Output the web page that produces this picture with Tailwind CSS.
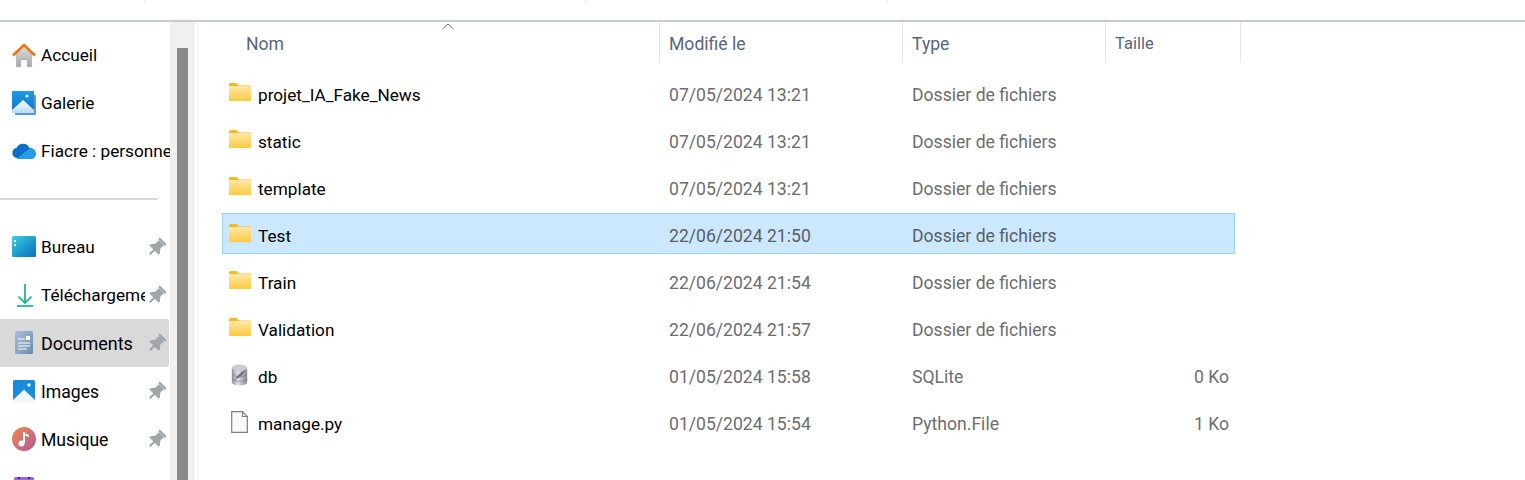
<!DOCTYPE html>
<html lang="fr">
<head>
    <meta charset="utf-8">
    <title>Explorateur de fichiers</title>
    <script src="https://cdn.jsdelivr.net/npm/@tailwindcss/browser@4"></script>
</head>
<body class="h-[480px] overflow-hidden bg-white font-['Roboto',sans-serif] text-[17.2px] text-black">
    <!-- top strip -->
    <div class="h-5 flex items-start">
        <div class="w-[146px] h-[3px] border-r-2 border-[#f0f0f0]"></div>
        <div class="w-[441px] h-[3px] border-r-2 border-[#f0f0f0]"></div>
        <div class="w-[301px] h-[3px] border-r-2 border-[#f0f0f0]"></div>
    </div>
    <div class="h-[2px] bg-[#c0ced5]"></div>

    <div class="flex h-[458px] overflow-hidden">
        <!-- sidebar -->
        <nav class="w-[170px] shrink-0 pt-[9px]">
            <div class="h-12 flex items-center pl-3 gap-[5px]">
                <svg class="w-6 h-6 shrink-0" viewBox="0 0 24 24"><defs><linearGradient id="g1" x1="0" y1="0" x2="0" y2="1"><stop offset="0" stop-color="#d8d8d8"/><stop offset="1" stop-color="#a9a9a9"/></linearGradient></defs><path d="M4 11 12 4l8 7v12a1 1 0 0 1-1 1h-4v-7H9v7H5a1 1 0 0 1-1-1z" fill="url(#g1)"/><path d="M1 12.500 12 2l11 10.500" fill="none" stroke="#e8750f" stroke-width="2.600"/></svg>
                <span class="pt-[2px]">Accueil</span>
            </div>
            <div class="h-12 flex items-center pl-3 gap-[5px]">
                <svg class="w-6 h-6 shrink-0" viewBox="0 0 24 24"><defs><linearGradient id="g5" x1="0" y1="0" x2="0" y2="1"><stop offset="0" stop-color="#1a9be8"/><stop offset="1" stop-color="#1470c8"/></linearGradient><linearGradient id="g6" x1="0" y1="0" x2="0" y2="1"><stop offset="0" stop-color="#ffffff"/><stop offset="1" stop-color="#b8dcf7"/></linearGradient></defs><path d="M3 4h20a1 1 0 0 1 1 1v18a1 1 0 0 1-1 1H3z" fill="#5a9ad8"/><path d="M1 0h20a1 1 0 0 1 1 1v20a1 1 0 0 1-1 1H1a1 1 0 0 1-1-1V1a1 1 0 0 1 1-1z" fill="url(#g5)"/><path d="M0 19 11 9l11 10v3H0z" fill="url(#g6)"/><circle cx="15" cy="5" r="1.500" fill="#e8f4fd"/></svg>
                <span class="pt-[2px]">Galerie</span>
            </div>
            <div class="h-12 flex items-center pl-3 gap-[5px]">
                <svg class="w-6 h-6 shrink-0" viewBox="0 0 24 24"><path d="M5 19a5 5 0 0 1-.500-9.900A7 7 0 0 1 17.500 9 5 5 0 0 1 19 19z" fill="#0a6fc8"/><path d="M5 20 14 12l4-2.500a5 5 0 0 1 1.500 10.500z" fill="#2a9be8"/></svg>
                <span class="pt-[2px] whitespace-nowrap overflow-hidden w-[129px]">Fiacre : personnel</span>
            </div>
            <div class="h-12 flex items-center">
                <div class="w-[158px] h-[2px] bg-[#d5d8da]"></div>
            </div>
            <div class="h-12 flex items-center pl-3 gap-[5px] relative">
                <svg class="w-6 h-6 shrink-0" viewBox="0 0 24 24"><defs><linearGradient id="g2" x1="0" y1="0" x2="1" y2="1"><stop offset="0" stop-color="#35d3e4"/><stop offset="1" stop-color="#0a6bb8"/></linearGradient></defs><rect y="1" width="24" height="21" rx="1.500" fill="url(#g2)"/><rect x="2" y="5" width="2" height="2" fill="#fff"/><rect x="2" y="9" width="2" height="2" fill="#fff"/></svg>
                <span class="pt-[2px]">Bureau</span>
                <svg class="absolute left-[147px] w-[19px] h-[19px]" viewBox="0 0 16 16"><g transform="rotate(45 8 8)" fill="#9fa7ad"><rect x="4" y="0" width="8" height="2"/><path d="M5 2h6v4.500l2.500 3V11h-11V9.500L5 6.500z"/><rect x="7.100" y="10" width="1.800" height="6"/></g></svg>
            </div>
            <div class="h-12 flex items-center pl-[17px] gap-[8px] relative">
                <svg class="w-4 h-[24px] shrink-0" viewBox="0 0 16 24"><path d="M8 1v19M1.500 13.500 8 20l6.500-6.500" fill="none" stroke="#16b096" stroke-width="1.700"/><path d="M0 23h16" stroke="#16b096" stroke-width="1.700"/></svg>
                <span class="pt-[2px] whitespace-nowrap overflow-hidden w-[104px]">Téléchargements</span>
                <svg class="absolute left-[147px] w-[19px] h-[19px]" viewBox="0 0 16 16"><g transform="rotate(45 8 8)" fill="#9fa7ad"><rect x="4" y="0" width="8" height="2"/><path d="M5 2h6v4.500l2.500 3V11h-11V9.500L5 6.500z"/><rect x="7.100" y="10" width="1.800" height="6"/></g></svg>
            </div>
            <div class="h-12 flex items-center pl-[15px] gap-[8px] relative bg-[#d9d9d9] w-[169px] rounded-r-[3px]">
                <svg class="w-[18px] h-6 shrink-0" viewBox="0 0 18 24"><defs><linearGradient id="g3" x1="0" y1="0" x2="1" y2="1"><stop offset="0" stop-color="#a8c0da"/><stop offset="1" stop-color="#6a8cae"/></linearGradient></defs><rect width="18" height="23" rx="1.500" fill="url(#g3)"/><path d="M3 8h7M3 12h12M3 15h12M3 18h9" stroke="#fff" stroke-width="1.200"/><rect x="11" y="5" width="4" height="4" fill="#fff"/></svg>
                <span class="text-[18px]">Documents</span>
                <svg class="absolute left-[147px] w-[19px] h-[19px]" viewBox="0 0 16 16"><g transform="rotate(45 8 8)" fill="#9fa7ad"><rect x="4" y="0" width="8" height="2"/><path d="M5 2h6v4.500l2.500 3V11h-11V9.500L5 6.500z"/><rect x="7.100" y="10" width="1.800" height="6"/></g></svg>
            </div>
            <div class="h-12 flex items-center pl-[13px] gap-[6px] relative">
                <svg class="w-[22px] h-[22px] shrink-0" viewBox="0 0 22 22"><rect width="22" height="22" rx="1.500" fill="#1a8ae0"/><path d="M0 20 11 9.500 22 20v2H0z" fill="#f2f8fd"/><circle cx="16" cy="5" r="1.700" fill="#f2f8fd"/></svg>
                <span class="pt-[2px] text-[17.6px]">Images</span>
                <svg class="absolute left-[147px] w-[19px] h-[19px]" viewBox="0 0 16 16"><g transform="rotate(45 8 8)" fill="#9fa7ad"><rect x="4" y="0" width="8" height="2"/><path d="M5 2h6v4.500l2.500 3V11h-11V9.500L5 6.500z"/><rect x="7.100" y="10" width="1.800" height="6"/></g></svg>
            </div>
            <div class="h-12 flex items-center pl-3 gap-[5px] relative">
                <svg class="w-6 h-6 shrink-0" viewBox="0 0 24 24"><defs><linearGradient id="g4" x1="0" y1="0" x2="1" y2="1"><stop offset="0" stop-color="#f08a4a"/><stop offset="1" stop-color="#b05a9e"/></linearGradient></defs><circle cx="12" cy="12" r="12" fill="url(#g4)"/><path d="M12 5v11" stroke="#fff" stroke-width="2"/><circle cx="9.500" cy="16.500" r="3" fill="#fff"/><path d="M12 5c1 2 4 2 5 3v2c-2-1-4-1-5-2z" fill="#fff"/></svg>
                <span class="pt-[2px] text-[17.6px]">Musique</span>
                <svg class="absolute left-[147px] w-[19px] h-[19px]" viewBox="0 0 16 16"><g transform="rotate(45 8 8)" fill="#9fa7ad"><rect x="4" y="0" width="8" height="2"/><path d="M5 2h6v4.500l2.500 3V11h-11V9.500L5 6.500z"/><rect x="7.100" y="10" width="1.800" height="6"/></g></svg>
            </div>
            <div class="h-12 flex items-center pl-[14px] gap-[7px] relative">
                <svg class="w-5 h-5 shrink-0" viewBox="0 0 20 20"><rect width="20" height="20" rx="1.500" fill="#9a62dc"/><rect x="4" width="2" height="2" fill="#3d2a70"/><rect x="14" width="2" height="2" fill="#3d2a70"/></svg>
                <span class="pt-[2px]">Vidéos</span>
            </div>
        </nav>

        <!-- scrollbar -->
        <div class="w-[25px] shrink-0 bg-[#f0f0f0] pl-[7px] pt-[26px]">
            <div class="w-[11px] h-[440px] bg-[#888888]"></div>
        </div>
        <div class="w-[2px] shrink-0"></div>
        <div class="w-[2px] shrink-0 bg-[#f5f5f5]"></div>

        <!-- file list -->
        <main class="pl-[23px] flex-1 relative">
            <svg class="absolute left-[243px] top-px w-[12px] h-[7px]" viewBox="0 0 12 7"><path d="M.500 6 6 1l5.500 5" fill="none" stroke="#6b6b6b"/></svg>
            <div class="grid grid-cols-[438px_243px_203px_135px] h-[41px] text-[#56657a] text-[17.6px]">
                <div class="pl-6 pt-1 flex items-center border-r border-[#e5e5e5]">Nom</div>
                <div class="pl-[9px] pt-1 flex items-center border-r border-[#e5e5e5]">Modifié le</div>
                <div class="pl-[9px] pt-1 flex items-center border-r border-[#e5e5e5]">Type</div>
                <div class="pl-[9px] pt-1 flex items-center border-r border-[#e5e5e5]"><span class="text-[16.5px]">Taille</span></div>
            </div>
            <div class="mt-[9px] flex flex-col gap-[6px] w-[1013px]">
                <div class="grid grid-cols-[437px_243px_203px_130px] h-[41px] pt-[6px] items-center border border-transparent">
                    <div class="flex items-center pl-[6px] gap-[7px]">
                        <svg class="w-[22px] h-[18px] shrink-0 -translate-y-[3px]" viewBox="0 0 22 18"><defs><linearGradient id="f1" x1="0" y1="0" x2="0" y2="1"><stop offset="0" stop-color="#ffe9a8"/><stop offset="1" stop-color="#fdc93f"/></linearGradient></defs><path d="M0 1.500A1.500 1.500 0 0 1 1.500 0h6L10 2.500h12V6H0z" fill="#f9b820"/><rect y="3" width="22" height="15" rx=".8" fill="url(#f1)"/></svg>
                        <span>projet_IA_Fake_News</span>
                    </div>
                    <div class="pl-[9px] text-[#6d6d6d] text-[17.6px]">07/05/2024 13:21</div>
                    <div class="pl-[9px] text-[#6d6d6d] text-[17.6px]">Dossier de fichiers</div>
                    <div></div>
                </div>
                <div class="grid grid-cols-[437px_243px_203px_130px] h-[41px] pt-[6px] items-center border border-transparent">
                    <div class="flex items-center pl-[6px] gap-[7px]">
                        <svg class="w-[22px] h-[18px] shrink-0 -translate-y-[3px]" viewBox="0 0 22 18"><path d="M0 1.500A1.500 1.500 0 0 1 1.500 0h6L10 2.500h12V6H0z" fill="#f9b820"/><rect y="3" width="22" height="15" rx=".8" fill="url(#f1)"/></svg>
                        <span>static</span>
                    </div>
                    <div class="pl-[9px] text-[#6d6d6d] text-[17.6px]">07/05/2024 13:21</div>
                    <div class="pl-[9px] text-[#6d6d6d] text-[17.6px]">Dossier de fichiers</div>
                    <div></div>
                </div>
                <div class="grid grid-cols-[437px_243px_203px_130px] h-[41px] pt-[6px] items-center border border-transparent">
                    <div class="flex items-center pl-[6px] gap-[7px]">
                        <svg class="w-[22px] h-[18px] shrink-0 -translate-y-[3px]" viewBox="0 0 22 18"><path d="M0 1.500A1.500 1.500 0 0 1 1.500 0h6L10 2.500h12V6H0z" fill="#f9b820"/><rect y="3" width="22" height="15" rx=".8" fill="url(#f1)"/></svg>
                        <span>template</span>
                    </div>
                    <div class="pl-[9px] text-[#6d6d6d] text-[17.6px]">07/05/2024 13:21</div>
                    <div class="pl-[9px] text-[#6d6d6d] text-[17.6px]">Dossier de fichiers</div>
                    <div></div>
                </div>
                <div class="grid grid-cols-[437px_243px_203px_130px] h-[41px] pt-[6px] items-center border border-[#99d1ff] bg-[#cce8ff]">
                    <div class="flex items-center pl-[6px] gap-[7px]">
                        <svg class="w-[22px] h-[18px] shrink-0 -translate-y-[3px]" viewBox="0 0 22 18"><path d="M0 1.500A1.500 1.500 0 0 1 1.500 0h6L10 2.500h12V6H0z" fill="#f9b820"/><rect y="3" width="22" height="15" rx=".8" fill="url(#f1)"/></svg>
                        <span>Test</span>
                    </div>
                    <div class="pl-[9px] text-[#5a5f63] text-[17.6px]">22/06/2024 21:50</div>
                    <div class="pl-[9px] text-[#5a5f63] text-[17.6px]">Dossier de fichiers</div>
                    <div></div>
                </div>
                <div class="grid grid-cols-[437px_243px_203px_130px] h-[41px] pt-[6px] items-center border border-transparent">
                    <div class="flex items-center pl-[6px] gap-[7px]">
                        <svg class="w-[22px] h-[18px] shrink-0 -translate-y-[3px]" viewBox="0 0 22 18"><path d="M0 1.500A1.500 1.500 0 0 1 1.500 0h6L10 2.500h12V6H0z" fill="#f9b820"/><rect y="3" width="22" height="15" rx=".8" fill="url(#f1)"/></svg>
                        <span>Train</span>
                    </div>
                    <div class="pl-[9px] text-[#6d6d6d] text-[17.6px]">22/06/2024 21:54</div>
                    <div class="pl-[9px] text-[#6d6d6d] text-[17.6px]">Dossier de fichiers</div>
                    <div></div>
                </div>
                <div class="grid grid-cols-[437px_243px_203px_130px] h-[41px] pt-[6px] items-center border border-transparent">
                    <div class="flex items-center pl-[6px] gap-[7px]">
                        <svg class="w-[22px] h-[18px] shrink-0 -translate-y-[3px]" viewBox="0 0 22 18"><path d="M0 1.500A1.500 1.500 0 0 1 1.500 0h6L10 2.500h12V6H0z" fill="#f9b820"/><rect y="3" width="22" height="15" rx=".8" fill="url(#f1)"/></svg>
                        <span>Validation</span>
                    </div>
                    <div class="pl-[9px] text-[#6d6d6d] text-[17.6px]">22/06/2024 21:57</div>
                    <div class="pl-[9px] text-[#6d6d6d] text-[17.6px]">Dossier de fichiers</div>
                    <div></div>
                </div>
                <div class="grid grid-cols-[437px_243px_203px_130px] h-[41px] pt-[6px] items-center border border-transparent">
                    <div class="flex items-center pl-[8px] gap-[10px]">
                        <svg class="w-[17px] h-[22px] shrink-0 -translate-y-[2px]" viewBox="0 0 20 24" preserveAspectRatio="none"><defs><linearGradient id="d1" x1="0" y1="0" x2="1" y2="0"><stop offset="0" stop-color="#8f939c"/><stop offset=".4" stop-color="#dfe1e6"/><stop offset="1" stop-color="#85888f"/></linearGradient></defs><path d="M1 4v16c0 2 4 3.500 9 3.500s9-1.500 9-3.500V4z" fill="url(#d1)"/><ellipse cx="10" cy="4" rx="9" ry="3.500" fill="#c9ccd3"/><path d="M3 19c3-5 8-10 14-13-2 5-6 9-11 10z" fill="#6f727a"/><path d="M1 11c2 2 6 3 9 3s7-1 9-3M1 16c2 2 6 3 9 3s7-1 9-3" fill="none" stroke="#6f727a" stroke-width=".7"/></svg>
                        <span>db</span>
                    </div>
                    <div class="pl-[9px] text-[#6d6d6d] text-[17.6px]">01/05/2024 15:58</div>
                    <div class="pl-[9px] text-[#6d6d6d] text-[17.6px]">SQLite</div>
                    <div class="pr-[7px] text-right text-[#6d6d6d] text-[17.6px]">0 Ko</div>
                </div>
                <div class="grid grid-cols-[437px_243px_203px_130px] h-[41px] pt-[6px] items-center border border-transparent">
                    <div class="flex items-center pl-[8px] gap-[10px]">
                        <svg class="w-[17px] h-[22px] shrink-0 -translate-y-[2px]" viewBox="0 0 17 22"><path d="M.7.7h10.800l4.800 4.800v15.800H.7z" fill="#fafafa" stroke="#7f7f7f" stroke-width="1.200"/><path d="M11.500.7v4.800h4.800" fill="none" stroke="#7f7f7f" stroke-width="1.200"/></svg>
                        <span>manage.py</span>
                    </div>
                    <div class="pl-[9px] text-[#6d6d6d] text-[17.6px]">01/05/2024 15:54</div>
                    <div class="pl-[9px] text-[#6d6d6d] text-[17.6px]">Python.File</div>
                    <div class="pr-[7px] text-right text-[#6d6d6d] text-[17.6px]">1 Ko</div>
                </div>
            </div>
        </main>
    </div>
</body>
</html>
